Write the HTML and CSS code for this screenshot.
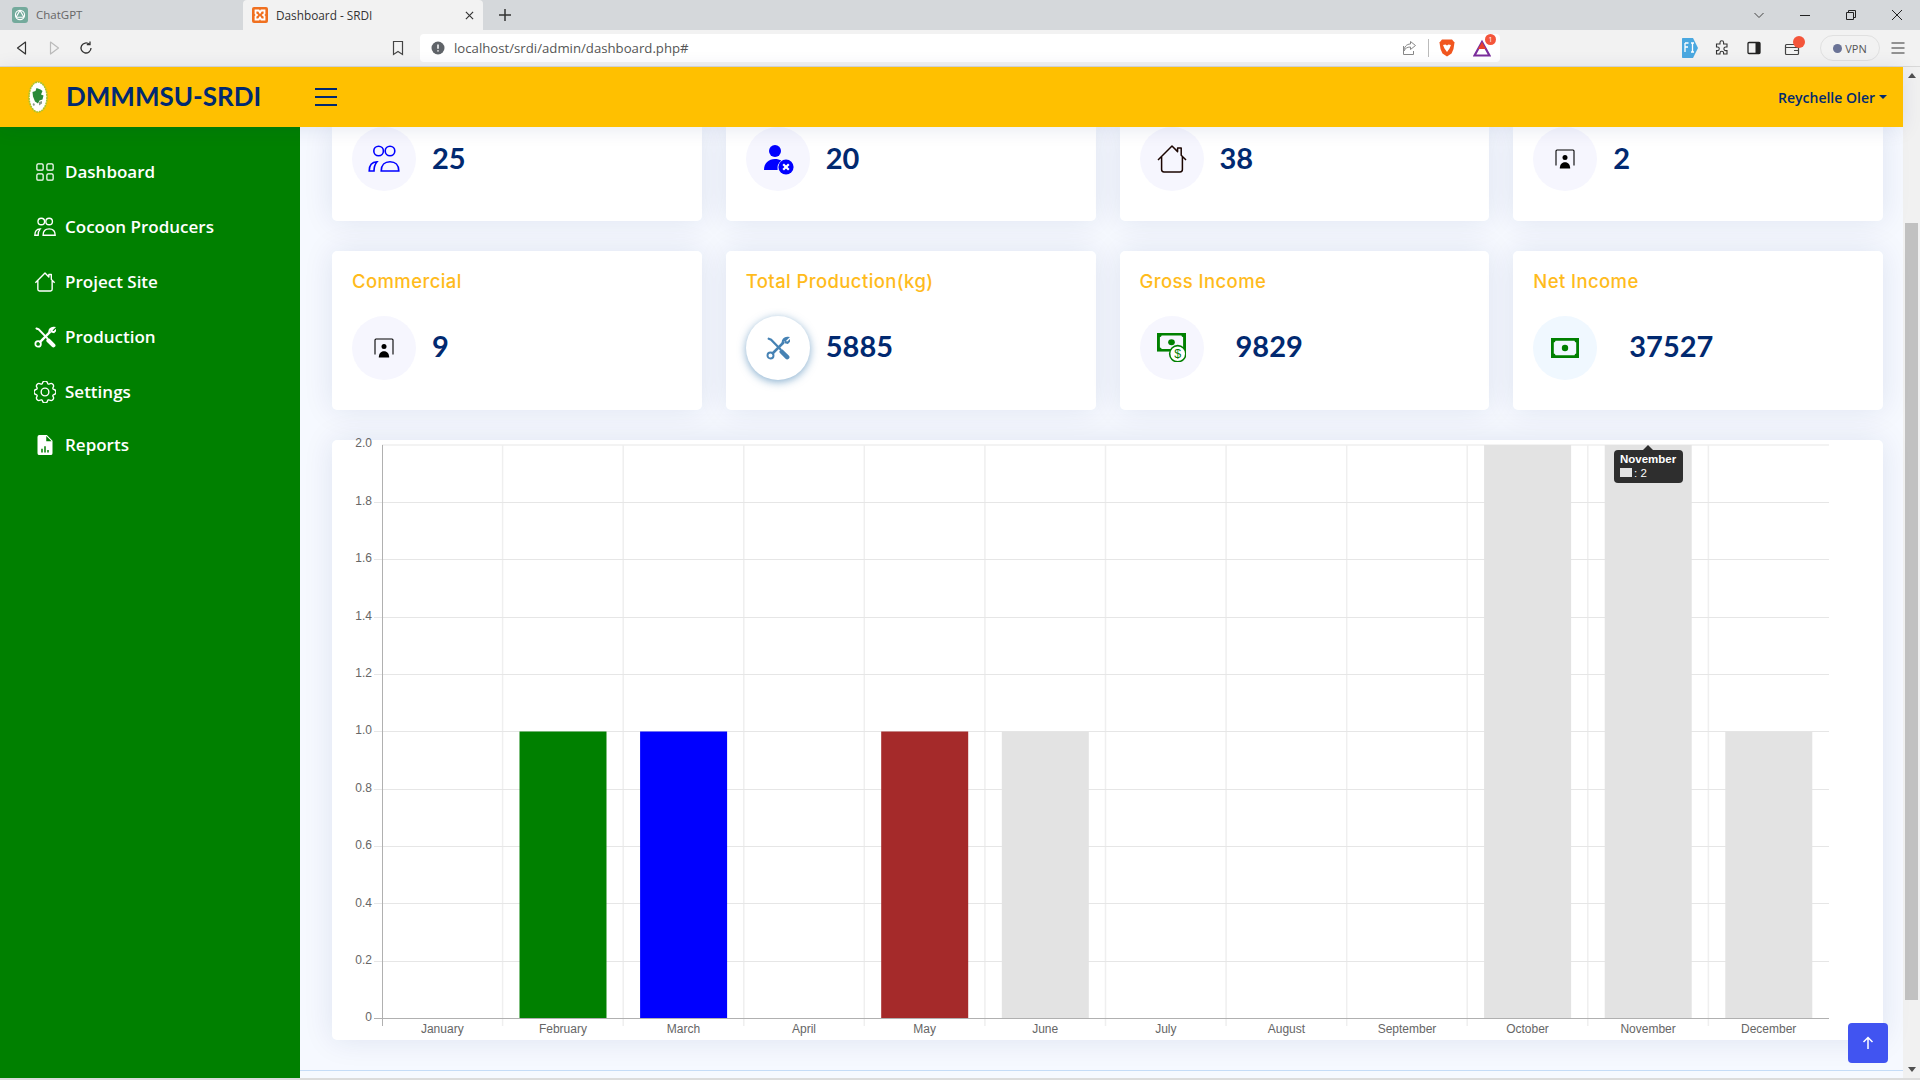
FILE: index.html
```html
<!DOCTYPE html>
<html lang="en">
<head>
    <meta charset="UTF-8">
    <meta name="viewport" content="width=device-width, initial-scale=1.0">
    <title>Dashboard - SRDI</title>
    <link rel="stylesheet" href="styles.css">
</head>
<body>
    <svg class="defs" aria-hidden="true">
        <symbol id="i-grid" viewBox="0 0 16 16"><path fill="currentColor" d="M1 2.500A1.500 1.500 0 0 1 2.500 1h3A1.500 1.500 0 0 1 7 2.500v3A1.500 1.500 0 0 1 5.500 7h-3A1.500 1.500 0 0 1 1 5.500v-3zM2.500 2a.5.5 0 0 0-.5.5v3a.5.5 0 0 0 .5.5h3a.5.5 0 0 0 .5-.5v-3a.5.5 0 0 0-.5-.5h-3zm6.500.5A1.500 1.500 0 0 1 10.500 1h3A1.500 1.500 0 0 1 15 2.500v3A1.500 1.500 0 0 1 13.500 7h-3A1.500 1.500 0 0 1 9 5.500v-3zm1.500-.5a.5.5 0 0 0-.5.5v3a.5.5 0 0 0 .5.5h3a.5.5 0 0 0 .5-.5v-3a.5.5 0 0 0-.5-.5h-3zM1 10.500A1.500 1.500 0 0 1 2.500 9h3A1.500 1.500 0 0 1 7 10.500v3A1.500 1.500 0 0 1 5.500 15h-3A1.500 1.500 0 0 1 1 13.500v-3zm1.500-.5a.5.5 0 0 0-.5.5v3a.5.5 0 0 0 .5.5h3a.5.5 0 0 0 .5-.5v-3a.5.5 0 0 0-.5-.5h-3zm6.500.5A1.500 1.500 0 0 1 10.500 9h3a1.500 1.500 0 0 1 1.500 1.500v3a1.500 1.500 0 0 1-1.500 1.500h-3A1.500 1.500 0 0 1 9 13.500v-3zm1.500-.5a.5.5 0 0 0-.5.5v3a.5.5 0 0 0 .5.5h3a.5.5 0 0 0 .5-.5v-3a.5.5 0 0 0-.5-.5h-3z"/></symbol>
        <symbol id="i-people" viewBox="0 0 16 16"><g class="sw" fill="none" stroke="currentColor"><circle cx="5.300" cy="4" r="2.400"/><circle cx="11" cy="4" r="2.400"/><path d="M6.600 14c0-3 1.800-4.600 4.400-4.600s4.400 1.600 4.400 4.600z"/><path d="M.6 14c0-2.800 1.500-4.500 3.900-4.600-1 1.200-1.500 2.700-1.500 4.600z"/></g></symbol>
        <symbol id="i-person-x" viewBox="0 0 16 16"><circle cx="6.500" cy="4" r="3" fill="currentColor"/><path fill="currentColor" d="M1 13.500c0-3.500 2.300-5.500 5.500-5.500 1.200 0 2.300.3 3.200.8a5 5 0 0 0-1.900 4.700z"/><circle cx="12" cy="12" r="3.800" fill="currentColor"/><path d="M10.600 10.600l2.800 2.800m0-2.800l-2.800 2.800" stroke="#fff" stroke-width="1.100"/></symbol>
        <symbol id="i-house" viewBox="0 0 16 16"><path class="sw" fill="none" stroke="currentColor" stroke-linejoin="round" d="M1 8.500L8 1.500l2.800 2.800V2.500h1.800v3.600L15 8.500M2.800 7v6.300c0 .7.400 1.200 1.200 1.200h8c.8 0 1.200-.5 1.200-1.200V7"/></symbol>
        <symbol id="i-tools" viewBox="0 0 16 16"><g fill="none" stroke="currentColor" stroke-linecap="round"><path stroke-width="1.500" d="M1.800 1.800l1.600 .6 6.200 6.400"/><path stroke-width="3" d="M10.500 10.500l3.600 3.600"/><path stroke-width="1.700" d="M4.500 11.500l7-7"/><circle cx="3" cy="13" r="2" stroke-width="1.300"/><path stroke-width="1.400" d="M11.200 4.800a3 3 0 0 1 3.300-3.600l-1.700 1.700.3 1.300 1.300.3 1.700-1.700"/></g></symbol>
        <symbol id="i-gear" viewBox="0 0 16 16"><g fill="none" stroke="currentColor" stroke-width="1"><circle cx="8" cy="8" r="2.800"/><path d="M9.796 1.343c-.527-1.790-3.065-1.790-3.592 0l-.094.319a.873.873 0 0 1-1.255.52l-.292-.16c-1.640-.892-3.433.902-2.540 2.541l.159.292a.873.873 0 0 1-.52 1.255l-.319.094c-1.790.527-1.790 3.065 0 3.592l.319.094a.873.873 0 0 1 .52 1.255l-.16.292c-.892 1.640.901 3.434 2.541 2.540l.292-.159a.873.873 0 0 1 1.255.52l.094.319c.527 1.790 3.065 1.790 3.592 0l.094-.319a.873.873 0 0 1 1.255-.52l.292.16c1.640.893 3.434-.902 2.540-2.541l-.159-.292a.873.873 0 0 1 .52-1.255l.319-.094c1.790-.527 1.790-3.065 0-3.592l-.319-.094a.873.873 0 0 1-.52-1.255l.16-.292c.893-1.640-.902-3.433-2.541-2.540l-.292.159a.873.873 0 0 1-1.255-.52z"/></g></symbol>
        <symbol id="i-file" viewBox="0 0 16 16"><path fill="currentColor" d="M3.500 0H9.500L14 4.500V14.500A1.500 1.500 0 0 1 12.500 16H3.500A1.500 1.500 0 0 1 2 14.500V1.500A1.500 1.500 0 0 1 3.500 0z"/><path fill="#008000" d="M9 .8V5h4.300zM5 11h1.200v3H5zM7.400 9h1.200v5H7.400zM9.800 12h1.200v2H9.800z"/></symbol>
        <symbol id="i-portrait" viewBox="0 0 20 20"><path fill="none" stroke="#000" stroke-width="1.100" d="M1 16.500V2c0-.6.400-1 1-1h16c.6 0 1 .4 1 1v14.500"/><circle cx="10" cy="8.500" r="2.500"/><path d="M4.800 19.500c0-4 2-6.300 5.200-6.300s5.200 2.300 5.200 6.300z"/></symbol>
        <symbol id="i-bill" viewBox="0 0 28 20" preserveAspectRatio="none"><path fill="#008000" fill-rule="evenodd" d="M0 0h28v20H0zM4.500 2.800a2 2 0 0 1-1.700 1.700v11a2 2 0 0 1 1.700 1.700h19a2 2 0 0 1 1.700-1.700v-11a2 2 0 0 1-1.700-1.700z"/><circle cx="14" cy="10" r="3.200" fill="#008000"/></symbol>
    </svg>

    <div class="tabstrip">
        <div class="tab">
            <svg class="favicon" viewBox="0 0 16 16"><rect width="16" height="16" rx="3" fill="#74aa9c"/><g fill="none" stroke="#fff" stroke-width="1.100"><circle cx="8" cy="8" r="4.600"/><path d="M8 3.400L4 10.300M8 3.400l4 6.900M4 10.300h8"/></g></svg>
            <span>ChatGPT</span>
        </div>
        <div class="tab active">
            <svg class="favicon" viewBox="0 0 16 16"><rect width="16" height="16" rx="2" fill="#f0701f"/><path fill="none" stroke="#fff" stroke-width="1.800" d="M3.500 3.500h3.200l1.300 2 1.300-2h3.200v3.200L11 8l1.500 1.300v3.200H9.300L8 10.500l-1.300 2H3.500V9.300L5 8 3.500 6.700z"/></svg>
            <span>Dashboard - SRDI</span>
            <svg class="tab-close" viewBox="0 0 10 10"><path d="M1 1l8 8M9 1l-8 8" stroke="#333" stroke-width="1.300"/></svg>
        </div>
        <svg class="new-tab" viewBox="0 0 14 14"><path d="M7 1v12M1 7h12" stroke="#333" stroke-width="1.500"/></svg>
        <div class="window-btns">
            <svg class="win" viewBox="0 0 12 12"><path d="M1.500 4l4.500 4.500L10.500 4" fill="none" stroke="#444"/></svg>
            <svg class="win" viewBox="0 0 12 12"><path d="M1 6.500h10" stroke="#222"/></svg>
            <svg class="win" viewBox="0 0 12 12"><path d="M1.500 3.500h7v7h-7zM3.500 3.500v-2h7v7h-2" fill="none" stroke="#222"/></svg>
            <svg class="win" viewBox="0 0 12 12"><path d="M1 1l10 10M11 1L1 11" stroke="#222"/></svg>
        </div>
    </div>

    <div class="toolbar">
        <button class="tool"><svg viewBox="0 0 16 16"><path d="M11.500 2L3.500 8l8 6z" fill="none" stroke="#333" stroke-width="1.200" stroke-linejoin="round"/></svg></button>
        <button class="tool"><svg viewBox="0 0 16 16"><path d="M4.500 2l8 6-8 6z" fill="none" stroke="#bbb" stroke-width="1.200" stroke-linejoin="round"/></svg></button>
        <button class="tool"><svg viewBox="0 0 16 16"><path d="M13 8a5 5 0 1 1-1.600-3.700M12 1.500v3.200H8.800" fill="none" stroke="#333" stroke-width="1.300"/></svg></button>
        <button class="tool bookmark"><svg viewBox="0 0 16 16"><path d="M3.500 1.500h9v13L8 11.500l-4.500 3z" fill="none" stroke="#444" stroke-width="1.200"/></svg></button>
        <div class="urlbar">
            <svg class="info" viewBox="0 0 14 14"><circle cx="7" cy="7" r="6.500" fill="#5f6368"/><path d="M7 3.500v4.200M7 9.300v1.300" stroke="#fff" stroke-width="1.500"/></svg>
            <span class="url">localhost/srdi/admin/dashboard.php#</span>
            <svg class="share" viewBox="0 0 16 16"><path d="M9.500 1.500l5 4-5 4V7C6 7 4 8.500 3 11c0-4 2.500-7 6.500-7zM2.500 6v8.500h10V11" fill="none" stroke="#888"/></svg>
            <span class="url-sep"></span>
            <svg class="brave" viewBox="0 0 16 18"><path d="M3 0.500h10l2.500 3-1 6.500-2 4.500L8 17.500 3.500 14.500l-2-4.500-1-6.500z" fill="#f1561f"/><path d="M4 6l2.500-.5L8 6.500l1.500-1L12 6l-1.500 3.500L8 13 5.500 9.500z" fill="#fff"/></svg>
            <span class="rewards">
                <svg viewBox="0 0 18 18"><path d="M9 3L1.500 16.500h15z" fill="none" stroke="#7b2d9c" stroke-width="2.200"/><path d="M9 3L5 10h8z" fill="#e8402c"/></svg>
                <span class="rewards-count">1</span>
            </span>
        </div>
        <svg class="ext-fi" viewBox="0 0 16 20"><path d="M1 0h10l5 10-5 10H1c-.6 0-1-.4-1-1V1c0-.6.400-1 1-1z" fill="#4aa8e0"/><path d="M3 5h3.500M3 5v9M3 9h3M9 5h3M9 14h3M10.500 5v9" stroke="#fff" stroke-width="1.300" fill="none"/></svg>
        <button class="tool"><svg viewBox="0 0 16 16"><path d="M6 2.500a1.800 1.800 0 0 1 3.600 0V4h3.400v3h-1.300a1.800 1.800 0 0 0 0 3.600H13V14H9.600v-1a1.800 1.800 0 0 0-3.600 0v1H2.500v-3.400h1a1.800 1.800 0 0 0 0-3.600h-1V4H6z" fill="none" stroke="#333" stroke-width="1.100"/></svg></button>
        <button class="tool"><svg viewBox="0 0 16 16"><rect x="2" y="2.500" width="12" height="11" rx="1" fill="none" stroke="#222" stroke-width="1.300"/><rect x="9.500" y="2.500" width="4.500" height="11" fill="#222"/></svg></button>
        <span class="wallet">
            <svg viewBox="0 0 16 16"><rect x="1.500" y="3.500" width="13" height="10" rx="1" fill="none" stroke="#444" stroke-width="1.200"/><path d="M1.500 6.500h13M10 9.500h4.500" stroke="#444" stroke-width="1.200"/></svg>
            <span class="wallet-dot"></span>
        </span>
        <span class="vpn"><span class="vpn-dot"></span>VPN</span>
        <button class="tool menu"><svg viewBox="0 0 16 16"><path d="M1.500 3h13M1.500 8h13M1.500 13h13" stroke="#333" stroke-width="1.100"/></svg></button>
    </div>

    <div class="viewport">
        <div class="page">
            <header class="topbar">
                <svg class="logo-img" viewBox="0 0 20 32"><ellipse cx="10" cy="16" rx="9" ry="15" fill="#fff" stroke="#a9c22e" stroke-width="1.600" stroke-dasharray="2 .7"/><path d="M4.500 11l3-1 1-3 4 1.500 2 1.500-1.500 3.500 2.500 1-1 4-3 1-1.500 3-3-2-2-5z" fill="#2a8a3a"/><path d="M11 21l3-1v2.500l-3 2zM4.500 23l1.500-1 1 2-1.500 1z" fill="#8b9a8b"/></svg>
                <span class="logo-text">DMMMSU-SRDI</span>
                <button class="burger"><span></span><span></span><span></span></button>
                <a class="user" href="#">Reychelle Oler<span class="caret"></span></a>
            </header>
            <div class="body">
                <aside class="sidebar">
                    <a class="nav-link" href="#"><svg class="nav-icon small"><use href="#i-grid"/></svg>Dashboard</a>
                    <a class="nav-link" href="#"><svg class="nav-icon"><use href="#i-people"/></svg>Cocoon Producers</a>
                    <a class="nav-link" href="#"><svg class="nav-icon"><use href="#i-house"/></svg>Project Site</a>
                    <a class="nav-link" href="#"><svg class="nav-icon"><use href="#i-tools"/></svg>Production</a>
                    <a class="nav-link" href="#"><svg class="nav-icon"><use href="#i-gear"/></svg>Settings</a>
                    <a class="nav-link last" href="#"><svg class="nav-icon small"><use href="#i-file"/></svg>Reports</a>
                </aside>
                <main class="main">
                    <div class="cards">
                        <div class="card clipped">
                            <div class="stat">
                                <div class="circle"><svg class="ic-32 blue"><use href="#i-people"/></svg></div>
                                <div class="num">25</div>
                            </div>
                        </div>
                        <div class="card clipped">
                            <div class="stat">
                                <div class="circle"><svg class="ic-32 blue"><use href="#i-person-x"/></svg></div>
                                <div class="num">20</div>
                            </div>
                        </div>
                        <div class="card clipped">
                            <div class="stat">
                                <div class="circle"><svg class="ic-32 dark"><use href="#i-house"/></svg></div>
                                <div class="num">38</div>
                            </div>
                        </div>
                        <div class="card clipped">
                            <div class="stat">
                                <div class="circle"><svg class="ic-20"><use href="#i-portrait"/></svg></div>
                                <div class="num">2</div>
                            </div>
                        </div>

                        <div class="card">
                            <h5 class="card-title">Commercial</h5>
                            <div class="stat">
                                <div class="circle"><svg class="ic-20"><use href="#i-portrait"/></svg></div>
                                <div class="num">9</div>
                            </div>
                        </div>
                        <div class="card">
                            <h5 class="card-title">Total Production(kg)</h5>
                            <div class="stat">
                                <div class="circle hovered"><svg class="ic-24 steel"><use href="#i-tools"/></svg></div>
                                <div class="num">5885</div>
                            </div>
                        </div>
                        <div class="card">
                            <h5 class="card-title">Gross Income</h5>
                            <div class="stat">
                                <div class="circle">
                                    <svg class="ic-gross" viewBox="0 0 28 28"><use href="#i-bill" width="28" height="18"/><circle cx="20" cy="20" r="7.800" fill="#fff" stroke="#008000" stroke-width="1.500"/><text class="dollar" x="20" y="24">$</text></svg>
                                </div>
                                <div class="num wide">9829</div>
                            </div>
                        </div>
                        <div class="card">
                            <h5 class="card-title">Net Income</h5>
                            <div class="stat">
                                <div class="circle aqua"><svg class="ic-bill"><use href="#i-bill"/></svg></div>
                                <div class="num wide">37527</div>
                            </div>
                        </div>
                    </div>

                    <div class="card chart-card">
                        <svg class="chart" viewBox="0 0 1551 600">
                            <g class="grid">
                                <path d="M170.600 5V586M291.200 5V586M411.800 5V586M532.300 5V586M652.900 5V586M773.500 5V586M894.100 5V586M1014.700 5V586M1135.200 5V586M1255.800 5V586M1376.400 5V586M50 5H1497"/>
                            </g>
                            <g class="grid-h">
                                <path d="M42 62.500H1497M42 119.500H1497M42 177.500H1497M42 234.500H1497M42 291.500H1497M42 349.500H1497M42 406.500H1497M42 463.500H1497M42 521.500H1497"/>
                            </g>
                            <rect x="187.500" y="291.500" width="87" height="286.500" fill="#008000"/>
                            <rect x="308.100" y="291.500" width="87" height="286.500" fill="#0000ff"/>
                            <rect x="549.200" y="291.500" width="87" height="286.500" fill="#a52a2a"/>
                            <rect x="669.800" y="291.500" width="87" height="286.500" fill="#e3e3e3"/>
                            <rect x="1152.100" y="5" width="87" height="573" fill="#e3e3e3"/>
                            <rect x="1272.700" y="5" width="87" height="573" fill="#e3e3e3"/>
                            <rect x="1393.300" y="291.500" width="87" height="286.500" fill="#e3e3e3"/>
                            <path class="axis" d="M50.500 5V586M42 578.500H1497"/>
                            <g class="y-labels">
                                <text x="40" y="7.300">2.0</text>
                                <text x="40" y="64.700">1.8</text>
                                <text x="40" y="122">1.6</text>
                                <text x="40" y="179.500">1.4</text>
                                <text x="40" y="237">1.2</text>
                                <text x="40" y="294.300">1.0</text>
                                <text x="40" y="351.700">0.8</text>
                                <text x="40" y="409">0.6</text>
                                <text x="40" y="466.500">0.4</text>
                                <text x="40" y="524">0.2</text>
                                <text x="40" y="581.300">0</text>
                            </g>
                            <g class="x-labels">
                                <text x="110.300" y="593">January</text>
                                <text x="230.900" y="593">February</text>
                                <text x="351.500" y="593">March</text>
                                <text x="472" y="593">April</text>
                                <text x="592.600" y="593">May</text>
                                <text x="713.200" y="593">June</text>
                                <text x="833.800" y="593">July</text>
                                <text x="954.400" y="593">August</text>
                                <text x="1075" y="593">September</text>
                                <text x="1195.500" y="593">October</text>
                                <text x="1316.100" y="593">November</text>
                                <text x="1436.700" y="593">December</text>
                            </g>
                        </svg>
                        <div class="tooltip">
                            <div class="tooltip-title">November</div>
                            <div class="tooltip-row"><span class="swatch"></span>: 2</div>
                        </div>
                    </div>
                    <footer class="footer"></footer>
                </main>
            </div>
            <a class="back-to-top" href="#"><svg viewBox="0 0 16 16"><path d="M8 14V2.500M3.500 7L8 2.500 12.500 7" fill="none" stroke="#fff" stroke-width="1.500"/></svg></a>
        </div>
        <div class="scrollbar">
            <span class="arrow-up"></span>
            <div class="thumb-track"><div class="thumb"></div></div>
            <span class="arrow-down"></span>
        </div>
    </div>
    <div class="bottom-strip"></div>
</body>
</html>
```

FILE: styles.css
```css
*{
    box-sizing: border-box;
}
body{
    margin: 0;
    height: 100vh;
    overflow: hidden;
    display: flex;
    flex-direction: column;
    font-family: "Open Sans", sans-serif;
    background: #f6f9ff;
}
.defs{
    position: absolute;
    width: 0;
    height: 0;
}
.sw{
    stroke-width: var(--sw, 1);
}
button{
    border: none;
    background: none;
    padding: 0;
}

/* browser chrome */
.tabstrip{
    height: 30px;
    flex: none;
    display: flex;
    align-items: center;
    background: #d5d8db;
    padding-left: 3px;
}
.tab{
    width: 240px;
    height: 29px;
    margin-bottom: 1px;
    display: flex;
    align-items: center;
    gap: 8px;
    padding-left: 9px;
    font-size: 11.500px;
    color: #666;
}
.tab.active{
    height: 30px;
    margin-bottom: 0;
    background: #f2f2f2;
    border-radius: 4px 4px 0 0;
    color: #333;
    font-size: 11.800px;
}
.favicon{
    width: 16px;
    height: 16px;
}
.tab-close{
    width: 9px;
    height: 9px;
    margin-left: auto;
    margin-right: 9px;
}
.new-tab{
    width: 14px;
    height: 14px;
    margin-left: 15px;
}
.window-btns{
    margin-left: auto;
    display: flex;
    gap: 34px;
    padding-right: 17px;
}
.win{
    width: 12px;
    height: 12px;
}
.toolbar{
    height: 37px;
    flex: none;
    display: flex;
    align-items: center;
    background: #f2f2f2;
    border-bottom: 1px solid #d8d8d8;
    padding-left: 6px;
}
.tool{
    width: 32px;
    height: 32px;
    display: flex;
    align-items: center;
    justify-content: center;
}
.tool svg{
    width: 16px;
    height: 16px;
}
.bookmark{
    margin-left: 280px;
}
.urlbar{
    width: 1080px;
    height: 28px;
    margin-left: 6px;
    display: flex;
    align-items: center;
    background: #fff;
    border-radius: 4px;
    padding: 0 9px 0 11px;
}
.info{
    width: 14px;
    height: 14px;
}
.url{
    margin-left: 9px;
    font-size: 13.200px;
    color: #555;
}
.share{
    width: 16px;
    height: 16px;
    margin-left: auto;
}
.url-sep{
    width: 1px;
    height: 18px;
    background: #bbb;
    margin: 0 10px 0 11px;
}
.brave{
    width: 16px;
    height: 18px;
}
.rewards{
    position: relative;
    width: 18px;
    height: 18px;
    margin-left: 18px;
}
.rewards svg{
    width: 18px;
    height: 18px;
}
.rewards-count{
    position: absolute;
    top: -5px;
    right: -5px;
    width: 11px;
    height: 11px;
    border-radius: 50%;
    background: #f4553a;
    color: #fff;
    font-size: 7px;
    line-height: 11px;
    text-align: center;
}
.ext-fi{
    width: 16px;
    height: 20px;
    margin-left: 182px;
}
.ext-fi + .tool{
    margin-left: 8px;
}
.wallet{
    position: relative;
    width: 16px;
    height: 16px;
    margin: 0 8px 0 14px;
}
.wallet svg{
    width: 16px;
    height: 16px;
}
.wallet-dot{
    position: absolute;
    top: -4px;
    right: -5px;
    width: 12px;
    height: 12px;
    border-radius: 50%;
    background: #f4553a;
}
.vpn{
    width: 60px;
    height: 26px;
    margin-left: 12px;
    display: flex;
    align-items: center;
    justify-content: center;
    gap: 3px;
    border: 1px solid #e0e0e0;
    border-radius: 13px;
    font-size: 11px;
    color: #555;
}
.vpn-dot{
    width: 9px;
    height: 9px;
    border-radius: 50%;
    background: #6a7396;
}
.menu{
    margin-left: 2px;
}

/* page area */
.viewport{
    flex: 1;
    display: flex;
    min-height: 0;
}
.page{
    position: relative;
    flex: 1;
    min-width: 0;
    display: flex;
    flex-direction: column;
}
.topbar{
    position: relative;
    z-index: 5;
    height: 60px;
    flex: none;
    display: flex;
    align-items: center;
    background: #ffc000;
    box-shadow: 0 2px 20px rgba(1, 41, 112, 0.1);
    padding: 0 16px 0 28px;
}
.logo-img{
    width: 20px;
    height: 32px;
}
.logo-text{
    margin: 0 0 2px 18px;
    font-family: Lato, sans-serif;
    font-size: 26px;
    font-weight: 700;
    color: #012970;
}
.burger{
    margin: 0 0 1px 54px;
    width: 22px;
    height: 18px;
    display: flex;
    flex-direction: column;
    justify-content: space-between;
}
.burger span{
    height: 2px;
    background: #012970;
}
.user{
    margin-left: auto;
    font-size: 14px;
    font-weight: 600;
    color: #012970;
    text-decoration: none;
    display: flex;
    align-items: center;
}
.caret{
    width: 0;
    height: 0;
    margin-left: 4px;
    border-top: 4px solid #012970;
    border-left: 4px solid transparent;
    border-right: 4px solid transparent;
}
.body{
    flex: 1;
    min-height: 0;
    display: flex;
}
.sidebar{
    width: 300px;
    flex: none;
    background: #008000;
    padding-top: 17px;
}
.nav-link{
    height: 55px;
    display: flex;
    align-items: center;
    padding-left: 34px;
    font-size: 17px;
    font-weight: 600;
    color: #fff;
    text-decoration: none;
}
.nav-link.last{
    margin-top: -2px;
}
.nav-icon{
    width: 22px;
    height: 22px;
    margin-right: 9px;
}
.nav-icon.small{
    width: 20px;
    height: 20px;
    margin: 0 10px 0 1px;
}
.main{
    flex: 1;
    min-width: 0;
    padding: 0 20px 0 32px;
}
.cards{
    display: grid;
    grid-template-columns: repeat(4, 1fr);
    gap: 30px 24px;
}
.card{
    background: #fff;
    border-radius: 5px;
    box-shadow: 0 0 30px rgba(1, 41, 112, 0.1);
    padding: 0 20px 30px;
}
.card.clipped{
    border-radius: 0 0 5px 5px;
}
.card-title{
    margin: 0;
    padding: 20px 0 23px;
    font-family: Inter, sans-serif;
    font-size: 18.500px;
    letter-spacing: 0.4px;
    line-height: 21.600px;
    font-weight: 500;
    color: #ffbb1c;
}
.stat{
    display: flex;
    align-items: center;
}
.circle{
    width: 64px;
    height: 64px;
    flex: none;
    display: flex;
    align-items: center;
    justify-content: center;
    border-radius: 50%;
    background: #f6f6fe;
}
.circle.hovered{
    background: #fff;
    box-shadow: 0 2px 8px rgba(70, 130, 180, 0.65);
}
.circle.aqua{
    background: #f0f8ff;
}
.num{
    padding: 0 0 2px 16px;
    font-family: Lato, sans-serif;
    font-size: 29px;
    font-weight: 700;
    line-height: 1.2;
    color: #012970;
}
.num.wide{
    padding-left: 32px;
}
.ic-32{
    width: 32px;
    height: 32px;
}
.ic-24{
    width: 24px;
    height: 24px;
}
.ic-20{
    width: 20px;
    height: 20px;
}
.ic-bill{
    width: 28px;
    height: 20px;
}
.ic-gross{
    width: 29px;
    height: 29px;
}
.dollar{
    font-size: 12px;
    font-family: "Liberation Sans", sans-serif;
    fill: #008000;
    text-anchor: middle;
}
.blue{
    color: #0000ff;
    --sw: 0.8;
}
.dark{
    color: #1a0500;
    --sw: 0.75;
}
.steel{
    color: #4682b4;
}

/* chart */
.chart-card{
    position: relative;
    height: 600px;
    margin-top: 30px;
    padding: 0;
}
.chart{
    display: block;
    width: 100%;
    height: 100%;
    overflow: visible;
}
.grid path{
    fill: none;
    stroke: #efefef;
    stroke-width: 1.500;
}
.grid-h path{
    fill: none;
    stroke: #e6e6e6;
    stroke-width: 1;
}
.axis{
    fill: none;
    stroke: #b0b0b0;
    stroke-width: 1;
}
.y-labels text,
.x-labels text{
    font-family: "Liberation Sans", sans-serif;
    font-size: 12px;
    fill: #666;
}
.y-labels text{
    text-anchor: end;
}
.x-labels text{
    text-anchor: middle;
}
.tooltip{
    position: absolute;
    left: 1282px;
    top: 10px;
    width: 69px;
    height: 33px;
    padding: 2px 6px;
    border-radius: 4px;
    background: #2e2e2e;
    color: #fff;
    font-family: "Liberation Sans", sans-serif;
    font-size: 11.500px;
    line-height: 14px;
}
.tooltip::before{
    content: "";
    position: absolute;
    left: 29px;
    top: -5px;
    border-bottom: 5px solid #2e2e2e;
    border-left: 5px solid transparent;
    border-right: 5px solid transparent;
}
.tooltip-title{
    font-weight: 700;
}
.tooltip-row{
    display: flex;
    align-items: center;
}
.swatch{
    width: 12px;
    height: 9px;
    margin-right: 2px;
    background: #e3e3e3;
}
.footer{
    margin: 30px -20px 0 -32px;
    border-top: 1px solid #c5dcf7;
}
.back-to-top{
    position: absolute;
    left: 1848px;
    top: 956px;
    width: 40px;
    height: 40px;
    display: flex;
    align-items: center;
    justify-content: center;
    background: #4154f1;
    border-radius: 4px;
}
.back-to-top svg{
    width: 16px;
    height: 16px;
}

/* fake scrollbar */
.scrollbar{
    width: 17px;
    flex: none;
    display: flex;
    flex-direction: column;
    align-items: center;
    background: #f1f1f1;
    padding: 6px 0;
}
.thumb-track{
    flex: 1;
    width: 100%;
    padding: 0 2px;
}
.thumb{
    height: 777px;
    margin-top: 145px;
    background: #c1c1c1;
}
.arrow-up{
    border-bottom: 5px solid #505050;
    border-left: 4px solid transparent;
    border-right: 4px solid transparent;
}
.arrow-down{
    border-top: 5px solid #505050;
    border-left: 4px solid transparent;
    border-right: 4px solid transparent;
}
.bottom-strip{
    height: 2px;
    flex: none;
    background: #dcdcdc;
}
```
